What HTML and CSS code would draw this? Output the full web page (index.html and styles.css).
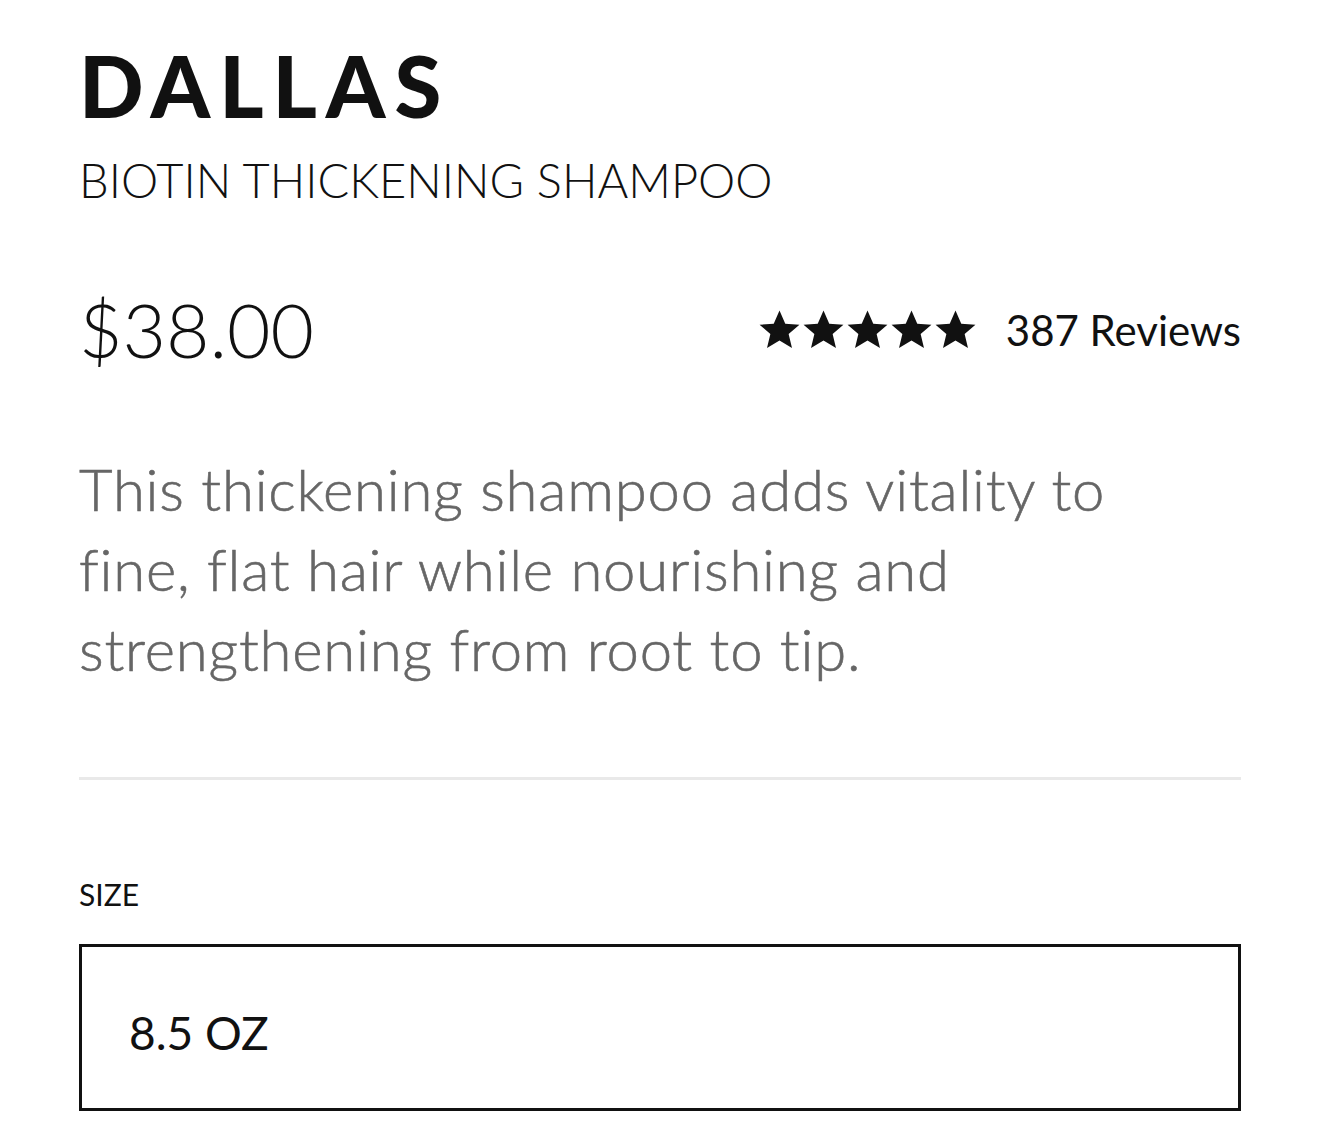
FILE: index.html
```html
<!DOCTYPE html>
<html lang="en">
<head>
    <meta charset="UTF-8">
    <meta name="viewport" content="width=device-width, initial-scale=1.0">
    <title>Dallas - Biotin Thickening Shampoo</title>
    <link rel="stylesheet" href="styles.css">
</head>
<body>
    <div class="product">
        <h1 class="brand">DALLAS</h1>
        <p class="product-name">BIOTIN THICKENING SHAMPOO</p>

        <div class="price-row">
            <span class="price">$38.00</span>
            <a class="rating" href="#reviews">
                <span class="stars">
                    <svg viewBox="1 1.5 22 20.5"><path d="M12 1.5l3.1 7.1 7.6.6-5.8 5 1.8 7.5L12 17.7l-6.7 4 1.8-7.5-5.8-5 7.6-.6z"/></svg>
                    <svg viewBox="1 1.5 22 20.5"><path d="M12 1.5l3.1 7.1 7.6.6-5.8 5 1.8 7.5L12 17.7l-6.7 4 1.8-7.5-5.8-5 7.6-.6z"/></svg>
                    <svg viewBox="1 1.5 22 20.5"><path d="M12 1.5l3.1 7.1 7.6.6-5.8 5 1.8 7.5L12 17.7l-6.7 4 1.8-7.5-5.8-5 7.6-.6z"/></svg>
                    <svg viewBox="1 1.5 22 20.5"><path d="M12 1.5l3.1 7.1 7.6.6-5.8 5 1.8 7.5L12 17.7l-6.7 4 1.8-7.5-5.8-5 7.6-.6z"/></svg>
                    <svg viewBox="1 1.5 22 20.5"><path d="M12 1.5l3.1 7.1 7.6.6-5.8 5 1.8 7.5L12 17.7l-6.7 4 1.8-7.5-5.8-5 7.6-.6z"/></svg>
                </span>
                <span class="review-count">387 Reviews</span>
            </a>
        </div>

        <p class="description">This thickening shampoo adds vitality to fine, flat hair while nourishing and strengthening from root to tip.</p>

        <hr class="divider">

        <div class="option">
            <label class="option-label">SIZE</label>
            <div class="size-box">8.5 OZ</div>
        </div>
    </div>
</body>
</html>
```

FILE: styles.css
```css
body {
    font-family: Lato, "Open Sans", sans-serif;
    background-color: #fff;
    color: #111;
    margin: 0;
    padding: 0 79px;
}
.product {
    display: flex;
    flex-direction: column;
}
.brand {
    margin: 43px 0 0;
    font-size: 85px;
    font-weight: 900;
    line-height: 1;
    letter-spacing: 0.105em;
}
.product-name {
    margin: 29px 0 0;
    font-size: 47px;
    font-weight: 300;
    line-height: 1;
}
.price-row {
    display: flex;
    justify-content: space-between;
    align-items: center;
    margin-top: 88px;
}
.price {
    font-size: 75px;
    font-weight: 300;
    line-height: 1;
}
.rating {
    display: flex;
    align-items: center;
    gap: 30px;
    color: #111;
    text-decoration: none;
}
.stars {
    display: flex;
    gap: 3px;
}
.stars svg {
    width: 41px;
    height: 39px;
    fill: #111;
}
.review-count {
    font-size: 42px;
    font-weight: 400;
}
.description {
    margin: 82px 0 0;
    max-width: 1145px;
    font-size: 58px;
    line-height: 80px;
    letter-spacing: 0.8px;
    color: #666;
    font-weight: 300;
    -webkit-text-stroke: 0.6px #666;
}
.divider {
    margin: 88px 0 0;
    border: none;
    border-top: 3px solid #e9e9e9;
}
.option {
    display: flex;
    flex-direction: column;
    margin-top: 99px;
}
.option-label {
    font-size: 30px;
    font-weight: 400;
    line-height: 1;
}
.size-box {
    margin-top: 35px;
    border: 3px solid #111;
    display: flex;
    align-items: center;
    padding: 10px 0 0 47px;
    box-sizing: border-box;
    height: 167px;
    font-size: 46px;
    font-weight: 400;
}
```
